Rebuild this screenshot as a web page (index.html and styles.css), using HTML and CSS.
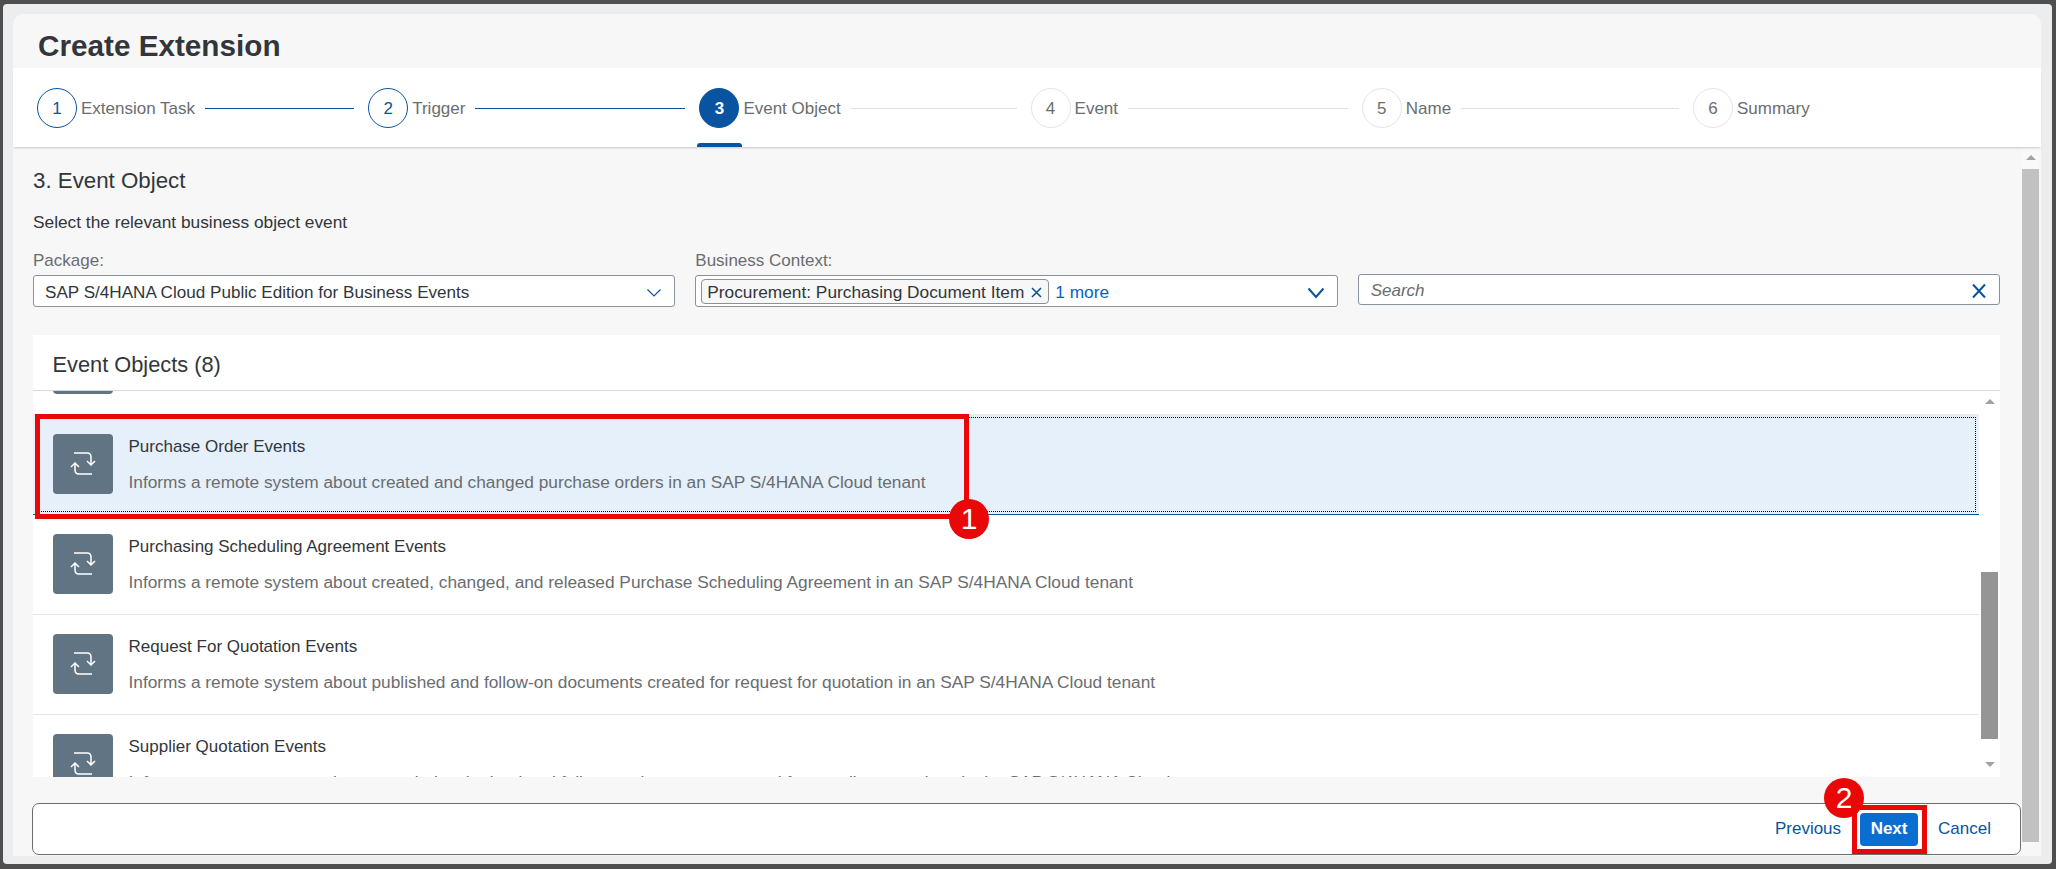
FILE: index.html
```html
<!DOCTYPE html>
<html lang="en">
<head>
    <meta charset="UTF-8">
    <title>Create Extension</title>
    <link rel="stylesheet" href="styles.css">
</head>
<body>
    <div class="dialog">
        <div class="panel">
            <h1>Create Extension</h1>

            <div class="stepper">
                <div class="step done"><span class="circle">1</span><span class="step-label">Extension Task</span><span class="line"></span></div>
                <div class="step done"><span class="circle">2</span><span class="step-label">Trigger</span><span class="line"></span></div>
                <div class="step current"><span class="circle">3</span><span class="step-label">Event Object</span><span class="line"></span></div>
                <div class="step"><span class="circle">4</span><span class="step-label">Event</span><span class="line"></span></div>
                <div class="step"><span class="circle">5</span><span class="step-label">Name</span><span class="line"></span></div>
                <div class="step"><span class="circle">6</span><span class="step-label">Summary</span></div>
            </div>

            <div class="body">
                <div class="main">
                    <h2>3. Event Object</h2>
                    <p class="intro">Select the relevant business object event</p>

                    <div class="filters">
                        <div class="field">
                            <label>Package:</label>
                            <div class="input">
                                <span class="value">SAP S/4HANA Cloud Public Edition for Business Events</span>
                                <svg class="chevron" width="16" height="10" viewBox="0 0 16 10"><path d="M1.5 1.5 8 8l6.5-6.5" fill="none" stroke="#0854a0" stroke-width="1.2"/></svg>
                            </div>
                        </div>
                        <div class="field">
                            <label>Business Context:</label>
                            <div class="input">
                                <span class="chip">Procurement: Purchasing Document Item
                                    <svg width="13" height="13" viewBox="0 0 13 13"><path d="M2 2l9 9M11 2l-9 9" fill="none" stroke="#0854a0" stroke-width="1.6"/></svg>
                                </span>
                                <a class="more">1 more</a>
                                <svg class="chevron" width="18" height="12" viewBox="0 0 18 12"><path d="M1.5 1.5 9 10l7.5-8.5" fill="none" stroke="#0854a0" stroke-width="2"/></svg>
                            </div>
                        </div>
                        <div class="field">
                            <label>&nbsp;</label>
                            <div class="input search">
                                <span class="placeholder">Search</span>
                                <svg class="chevron" width="16" height="16" viewBox="0 0 16 16"><path d="M2 1.5l12 13M14 1.5l-12 13" fill="none" stroke="#0854a0" stroke-width="2"/></svg>
                            </div>
                        </div>
                    </div>

                    <div class="card">
                        <div class="card-head">Event Objects (8)</div>
                        <div class="list">
                            <div class="rows">
                                <div class="row first">
                                    <span class="icon"><svg width="60" height="60" viewBox="0 0 60 60"><path d="M21 19h13q4 0 4 4v8M34 27l4 4 4-4M39 40H26q-4 0-4-4v-7M18 33l4-4 4 4" fill="none" stroke="#fff" stroke-width="1.5"/></svg></span>
                                    <div class="text">
                                        <div class="title">Purchase Contract Events</div>
                                        <div class="desc">Informs a remote system about created and changed purchase contracts in an SAP S/4HANA Cloud tenant</div>
                                    </div>
                                </div>
                                <div class="row selected">
                                    <span class="icon"><svg width="60" height="60" viewBox="0 0 60 60"><path d="M21 19h13q4 0 4 4v8M34 27l4 4 4-4M39 40H26q-4 0-4-4v-7M18 33l4-4 4 4" fill="none" stroke="#fff" stroke-width="1.5"/></svg></span>
                                    <div class="text">
                                        <div class="title">Purchase Order Events</div>
                                        <div class="desc">Informs a remote system about created and changed purchase orders in an SAP S/4HANA Cloud tenant</div>
                                    </div>
                                </div>
                                <div class="row">
                                    <span class="icon"><svg width="60" height="60" viewBox="0 0 60 60"><path d="M21 19h13q4 0 4 4v8M34 27l4 4 4-4M39 40H26q-4 0-4-4v-7M18 33l4-4 4 4" fill="none" stroke="#fff" stroke-width="1.5"/></svg></span>
                                    <div class="text">
                                        <div class="title">Purchasing Scheduling Agreement Events</div>
                                        <div class="desc">Informs a remote system about created, changed, and released Purchase Scheduling Agreement in an SAP S/4HANA Cloud tenant</div>
                                    </div>
                                </div>
                                <div class="row">
                                    <span class="icon"><svg width="60" height="60" viewBox="0 0 60 60"><path d="M21 19h13q4 0 4 4v8M34 27l4 4 4-4M39 40H26q-4 0-4-4v-7M18 33l4-4 4 4" fill="none" stroke="#fff" stroke-width="1.5"/></svg></span>
                                    <div class="text">
                                        <div class="title">Request For Quotation Events</div>
                                        <div class="desc">Informs a remote system about published and follow-on documents created for request for quotation in an SAP S/4HANA Cloud tenant</div>
                                    </div>
                                </div>
                                <div class="row">
                                    <span class="icon"><svg width="60" height="60" viewBox="0 0 60 60"><path d="M21 19h13q4 0 4 4v8M34 27l4 4 4-4M39 40H26q-4 0-4-4v-7M18 33l4-4 4 4" fill="none" stroke="#fff" stroke-width="1.5"/></svg></span>
                                    <div class="text">
                                        <div class="title">Supplier Quotation Events</div>
                                        <div class="desc">Informs a remote system about awarded, submitted and follow-on documents created for supplier quotations in the SAP S/4HANA Cloud tenant</div>
                                    </div>
                                </div>
                            </div>
                            <div class="list-scroll">
                                <span class="arrow-up"></span>
                                <span class="list-thumb"></span>
                                <span class="arrow-down"></span>
                            </div>
                        </div>
                    </div>

                    <div class="footer">
                        <a class="link">Previous</a>
                        <button type="button">Next</button>
                        <a class="link">Cancel</a>
                    </div>
                </div>

                <div class="page-scroll">
                    <span class="arrow-up"></span>
                    <span class="page-thumb"></span>
                </div>
            </div>
        </div>
    </div>

    <!-- tutorial markup on top of the screen -->
    <div class="mark mark-row"></div>
    <div class="mark mark-next"></div>
    <div class="badge badge-one">1</div>
    <div class="badge badge-two">2</div>
</body>
</html>
```

FILE: styles.css
```css
* {
    box-sizing: border-box;
}
body {
    margin: 0;
    height: 869px;
    overflow: hidden;
    padding: 4px 4px 5px 3px;
    background-color: #4f4f4f;
    font-family: "Liberation Sans", Arial, sans-serif;
    font-size: 17px;
    color: #32363a;
}
.dialog {
    height: 860px;
    padding: 10px 11px 8px 10px;
    background-color: #ebedef;
    border-radius: 4px;
}
.panel {
    height: 842px;
    background-color: #f7f7f7;
    border-radius: 10px 10px 0 0;
}
h1 {
    margin: 0;
    height: 54px;
    padding: 15px 0 5px 25px;
    font-size: 29.7px;
    line-height: 34px;
    font-weight: bold;
}

/* stepper */
.stepper {
    display: grid;
    grid-template-columns: repeat(6, 331.2px);
    height: 79px;
    padding: 20px 0 0 24px;
    background-color: #fff;
    box-shadow: 0 2px 2px -1px rgba(0, 0, 0, 0.2);
    position: relative;
}
.step {
    display: flex;
    align-items: center;
    height: 40px;
    color: #6a6d70;
}
.circle {
    flex: none;
    display: flex;
    align-items: center;
    justify-content: center;
    width: 40px;
    height: 40px;
    padding-top: 2px;
    border: 1px solid #e5e5e5;
    border-radius: 50%;
    background-color: #fff;
}
.step-label {
    margin-left: 4px;
    padding-top: 2px;
}
.line {
    flex: 1;
    height: 1px;
    margin: 0 14px 0 10px;
    background-color: #e0e0e0;
}
.done .circle {
    border-color: #0854a0;
    color: #0854a0;
}
.done .line {
    background-color: #0854a0;
}
.current .circle {
    border-color: #0854a0;
    background-color: #0854a0;
    color: #fff;
    font-weight: bold;
}
.current {
    position: relative;
}
.current::after {
    content: "";
    position: absolute;
    left: -2px;
    top: 55px;
    width: 45px;
    height: 4px;
    background-color: #0854a0;
    border-radius: 3px 3px 0 0;
}

/* page body */
.body {
    display: flex;
    height: 709px;
}
.main {
    width: 2009px;
    padding: 22px 22px 0 20px;
}
h2 {
    margin: 0;
    font-size: 22.3px;
    line-height: 24px;
    font-weight: normal;
}
.intro {
    margin: 18px 0 0;
    font-size: 17.3px;
    line-height: 22px;
}
.filters {
    display: grid;
    grid-template-columns: repeat(3, 1fr);
    column-gap: 20px;
    margin-top: 16px;
}
label {
    display: block;
    height: 26px;
    line-height: 24px;
    color: #6a6d70;
}
.input {
    display: flex;
    align-items: center;
    height: 32px;
    padding: 3px 4px 0 11px;
    border: 1px solid #89919a;
    border-radius: 3px;
    background-color: #fff;
}
.value {
    font-size: 17.1px;
}
.field:nth-child(2) .input {
    padding-left: 5px;
}
.search {
    height: 31px;
    margin-top: -1px;
    padding-top: 2px;
    padding-left: 12px;
}
.placeholder {
    font-style: italic;
    color: #6a6d70;
}
.chevron {
    margin-left: auto;
    margin-right: 8px;
}
.chip {
    display: flex;
    align-items: center;
    gap: 6px;
    height: 25px;
    margin-top: -3px;
    padding: 3px 5px 0;
    border: 1px solid #89919a;
    border-radius: 4px;
    background-color: #f7f7f7;
    font-size: 17.3px;
}
.more {
    margin-left: 6px;
    font-size: 17.3px;
    color: #0a5ec2;
}

/* event list */
.card {
    height: 442px;
    margin-top: 28px;
    background-color: #fff;
}
.card-head {
    height: 56px;
    padding: 4px 0 0 19.5px;
    border-bottom: 1px solid #d9d9d9;
    font-size: 21.8px;
    line-height: 51px;
}
.list {
    display: flex;
    height: 386px;
    overflow: hidden;
}
.rows {
    width: 1946px;
}
.row {
    display: flex;
    height: 100px;
    padding: 19px 0 0 20px;
    border-bottom: 1px solid #e5e5e5;
}
.row.first {
    margin-top: -77px;
    padding-top: 20px;
    border-bottom: none;
}
.row.selected {
    height: 101px;
    padding-top: 17px;
    border-top: 3px solid #e8ecf0;
    border-bottom: 1px solid #0854a0;
    background-color: #e5f0fa;
    outline: 1px dotted #000;
    outline-offset: -4px;
}
.icon {
    flex: none;
    width: 60px;
    height: 60px;
    border-radius: 4px;
    background-color: #607484;
}
.icon svg {
    display: block;
}
.text {
    margin: 1px 0 0 15.5px;
}
.title {
    line-height: 24px;
}
.desc {
    margin-top: 11px;
    font-size: 17.3px;
    line-height: 24px;
    color: #6a6d70;
}

/* scrollbars */
.list-scroll {
    display: flex;
    flex-direction: column;
    align-items: center;
    width: 17px;
    margin-left: 2px;
}
.arrow-up, .arrow-down {
    flex: none;
    width: 0;
    height: 0;
    border-left: 5px solid transparent;
    border-right: 5px solid transparent;
}
.arrow-up {
    border-bottom: 5px solid #a3a3a3;
}
.arrow-down {
    border-top: 5px solid #a3a3a3;
}
.list-scroll .arrow-up {
    margin-top: 8px;
}
.list-thumb {
    flex: none;
    width: 17px;
    height: 167px;
    margin-top: 168px;
    background-color: #959595;
}
.list-scroll .arrow-down {
    margin-top: 23px;
}
.page-scroll {
    display: flex;
    flex-direction: column;
    align-items: center;
    width: 17px;
    height: 695px;
    background-color: #f9f9f9;
}
.page-scroll .arrow-up {
    margin-top: 8px;
}
.page-thumb {
    flex: 1;
    width: 17px;
    margin-top: 9px;
    background-color: #c1c1c1;
}

/* footer toolbar */
.footer {
    display: flex;
    align-items: center;
    justify-content: flex-end;
    height: 52px;
    margin: 26px -21px 0 -1px;
    padding-right: 29px;
    border: 1px solid #6a6d70;
    border-radius: 7px;
    background-color: #fff;
}
.link {
    color: #0854a0;
}
button {
    width: 58px;
    height: 33px;
    margin: 0 20px 0 19px;
    padding: 0;
    border: none;
    border-radius: 4px;
    background-color: #0a6ed1;
    color: #fff;
    font-family: inherit;
    font-size: 17px;
    font-weight: bold;
}

/* red annotations */
.mark {
    position: absolute;
    border: 5px solid #ea0707;
}
.mark-row {
    left: 35px;
    top: 414px;
    width: 934px;
    height: 105px;
}
.mark-next {
    left: 1852px;
    top: 805px;
    width: 75px;
    height: 49px;
}
.badge {
    position: absolute;
    width: 40px;
    height: 40px;
    border-radius: 50%;
    background-color: #ea0707;
    color: #fff;
    font-size: 30px;
    line-height: 40px;
    text-align: center;
}
.badge-one {
    left: 949px;
    top: 499px;
}
.badge-two {
    left: 1824px;
    top: 778px;
}
```
